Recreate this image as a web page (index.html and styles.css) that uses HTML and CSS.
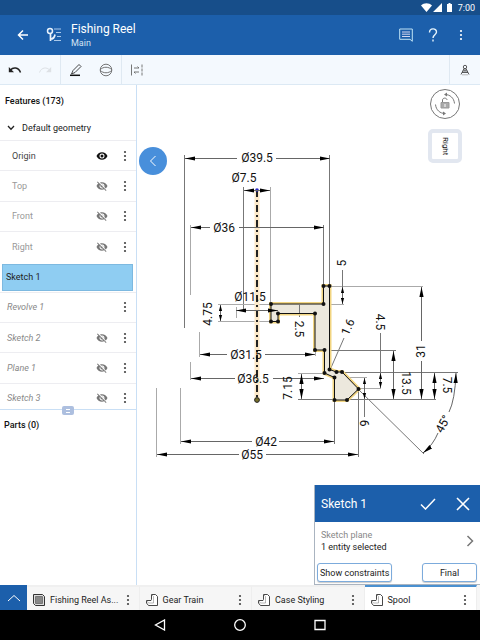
FILE: index.html
```html
<!DOCTYPE html>
<html lang="en">
<head>
<meta charset="utf-8">
<meta name="viewport" content="width=device-width, initial-scale=1">
<title>Fishing Reel</title>
<link rel="stylesheet" href="styles.css">
</head>
<body>
<svg class="defs" width="0" height="0" aria-hidden="true">
  <symbol id="dots" viewBox="0 0 4 12"><circle cx="2" cy="2" r="1.1"/><circle cx="2" cy="6" r="1.1"/><circle cx="2" cy="10" r="1.1"/></symbol>
  <symbol id="eye" viewBox="0 0 24 24"><path d="M12 4.500C7 4.500 2.700 7.600 1 12c1.700 4.400 6 7.500 11 7.500s9.300-3.100 11-7.500c-1.700-4.400-6-7.500-11-7.500zM12 17a5 5 0 1 1 0-10 5 5 0 0 1 0 10zm0-8a3 3 0 1 0 0 6 3 3 0 0 0 0-6z"/></symbol>
  <symbol id="eye-off" viewBox="0 0 24 24"><path d="M12 7a5 5 0 0 1 4.640 6.830l2.920 2.920A11.800 11.800 0 0 0 23 12c-1.730-4.390-6-7.500-11-7.500-1.400 0-2.740.25-3.980.7l2.160 2.160C10.740 7.130 11.350 7 12 7zM2 4.270l2.740 2.740A11.800 11.800 0 0 0 1 12c1.730 4.390 6 7.500 11 7.500 1.550 0 3.030-.3 4.380-.84L19.730 22 21 20.730 3.270 3 2 4.270zM7.530 9.800l1.550 1.550A3 3 0 0 0 12.650 14.920l1.550 1.550A5 5 0 0 1 7.530 9.800zm4.310-.78l3.150 3.150.02-.16a3 3 0 0 0-3-3l-.17.01z"/></symbol>
  <symbol id="part" viewBox="0 0 14 14"><path d="M6.500 1.500h4l2 2v9h-9l-2-2.500V7.500h4.500l.5-1z" fill="#fff" stroke="#333" stroke-width=".9"/><path d="M6.500 1.500l2 2V10H3.500l-2-2.500" fill="none" stroke="#888" stroke-width=".6"/></symbol>
</svg>

<div class="screen">
  <div class="status">
    <svg width="33" height="10" viewBox="0 0 33 10" fill="#fff"><path d="M0 2.500C3-.5 8-.5 11 2.500L5.500 9zM12 9l9-9v9zM26 1h1.500V0h2v1H31v8h-5z"/></svg>
    <span>7:00</span>
  </div>

  <header class="appbar">
    <button class="plain" aria-label="Back"><svg width="12" height="12" viewBox="0 0 12 12" fill="none" stroke="#fff" stroke-width="1.500"><path d="M11 6H2M6 1.500L1.500 6 6 10.500"/></svg></button>
    <button class="plain versions" aria-label="Versions"><svg width="16" height="16" viewBox="0 0 16 16" fill="none" stroke="#eaf3fc"><circle cx="4" cy="4" r="2.500" stroke-width="1.500"/><path d="M4.500 6.500V14M4.500 12c3 0 4-1.500 4.500-4.500" stroke-width="1.700"/><path d="M8 2h7M10 5.500h5M11 9.500h4M8 13.500h7" stroke="#a9c8ea"/></svg></button>
    <div class="heading"><h1>Fishing Reel</h1><p>Main</p></div>
    <div class="actions">
      <button class="plain" aria-label="Comments"><svg width="14" height="14" viewBox="0 0 14 14" fill="none" stroke="#bfe3f5"><path d="M.7 1h12.600v12.300L11 11.300H.7z"/><path d="M3 4h8M3 6.200h8M3 8.500h8" stroke="#d4d8f0"/></svg></button>
      <button class="plain" aria-label="Help"><svg width="10" height="14" viewBox="0 0 10 14" fill="none" stroke="#e6f4fc" stroke-width="1.400"><path d="M1.500 4.500C1.500-.3 8.500-.3 8.500 4c0 2.700-3.500 2.800-3.500 6"/><path d="M5 11.500v2"/></svg></button>
      <button class="plain" aria-label="More"><svg width="4" height="12" fill="#fff"><use href="#dots"/></svg></button>
    </div>
  </header>

  <nav class="toolbar" aria-label="Tools">
    <div class="tools">
      <button class="plain" aria-label="Undo"><svg width="14" height="10" viewBox="0 0 14 10"><path d="M2.500 5C5 2 10.500 2 12.500 7.500" fill="none" stroke="#222" stroke-width="1.500"/><path d="M.8 2v5.200H6z" fill="#222"/></svg></button>
      <button class="plain" aria-label="Redo"><svg width="14" height="10" viewBox="0 0 14 10"><path d="M11.500 5C9 2 3.500 2 1.500 7.500" fill="none" stroke="#dde1e5"/><path d="M13.200 2v5.200H8z" fill="#dde1e5"/></svg></button>
    </div>
    <div class="tools">
      <button class="plain" aria-label="Sketch"><svg width="14" height="14" viewBox="0 0 14 14" fill="none" stroke="#333"><path d="M2.500 11L4 7.500 10 1.500l2 2L6 9.500z" stroke-width=".9"/><path d="M1 12.300h10" stroke="#111" stroke-width="1.500"/></svg></button>
      <button class="plain" aria-label="Construction"><svg width="14" height="14" viewBox="0 0 14 14" fill="none" stroke="#555" stroke-width=".8"><circle cx="7" cy="7" r="5.800"/><path d="M1.500 6.500C4 3.500 10 3.500 12.500 6.500M1.500 7.500c2.500 3 8.500 3 11 0"/></svg></button>
    </div>
    <div class="tools">
      <button class="plain" aria-label="Dimension"><svg width="14" height="14" viewBox="0 0 14 14" fill="none" stroke="#666" stroke-width=".9"><path d="M1.500 1.500v11"/><path d="M12 1.500v11" stroke-dasharray="3 1"/><path d="M4 5h5M7.500 3.500L9 5M4 9h5M5.500 10.500L4 9"/></svg></button>
    </div>
    <div class="tools end">
      <button class="plain" aria-label="Inspect"><svg width="10" height="12" viewBox="0 0 10 12" fill="none" stroke="#333" stroke-width=".8"><circle cx="5" cy="3" r="1.700"/><path d="M4 4.500L2 8.500h6L6 4.500M1 10.500l1-2M9 10.500l-1-2M4 8V6h2v2"/><path d="M2 10.800h6" stroke="#aaa"/></svg></button>
    </div>
  </nav>

  <main class="workspace">
    <aside class="sidebar">
      <section class="features">
        <h2>Features (173)</h2>
        <button class="plain group"><svg width="8" height="6" viewBox="0 0 8 6" fill="none" stroke="#222" stroke-width="1.300"><path d="M1 1l3 3.200L7 1"/></svg>Default geometry</button>
        <ul>
          <li class="on"><span>Origin</span><button class="plain" aria-label="Hide Origin"><svg width="12" height="12"><use href="#eye"/></svg></button><button class="plain" aria-label="Origin menu"><svg width="4" height="12"><use href="#dots"/></svg></button></li>
          <li><span>Top</span><button class="plain" aria-label="Show Top"><svg width="12" height="12"><use href="#eye-off"/></svg></button><button class="plain" aria-label="Top menu"><svg width="4" height="12"><use href="#dots"/></svg></button></li>
          <li><span>Front</span><button class="plain" aria-label="Show Front"><svg width="12" height="12"><use href="#eye-off"/></svg></button><button class="plain" aria-label="Front menu"><svg width="4" height="12"><use href="#dots"/></svg></button></li>
          <li><span>Right</span><button class="plain" aria-label="Show Right"><svg width="12" height="12"><use href="#eye-off"/></svg></button><button class="plain" aria-label="Right menu"><svg width="4" height="12"><use href="#dots"/></svg></button></li>
          <li class="selected"><span>Sketch 1</span></li>
          <li class="later"><span>Revolve 1</span><button class="plain" aria-label="Revolve 1 menu"><svg width="4" height="12"><use href="#dots"/></svg></button></li>
          <li class="later"><span>Sketch 2</span><button class="plain" aria-label="Show Sketch 2"><svg width="12" height="12"><use href="#eye-off"/></svg></button><button class="plain" aria-label="Sketch 2 menu"><svg width="4" height="12"><use href="#dots"/></svg></button></li>
          <li class="later"><span>Plane 1</span><button class="plain" aria-label="Show Plane 1"><svg width="12" height="12"><use href="#eye-off"/></svg></button><button class="plain" aria-label="Plane 1 menu"><svg width="4" height="12"><use href="#dots"/></svg></button></li>
          <li class="later"><span>Sketch 3</span><button class="plain" aria-label="Show Sketch 3"><svg width="12" height="12"><use href="#eye-off"/></svg></button><button class="plain" aria-label="Sketch 3 menu"><svg width="4" height="12"><use href="#dots"/></svg></button></li>
        </ul>
      </section>
      <section class="parts">
        <button class="plain handle" aria-label="Resize lists"><svg width="4" height="4" viewBox="0 0 4 4" fill="none" stroke="#fff"><path d="M0 .5h4M0 3.500h4"/></svg></button>
        <h2>Parts (0)</h2>
      </section>
    </aside>

    <div class="canvas">
      <svg class="drawing" viewBox="137 85 343 500" preserveAspectRatio="xMinYMin meet">
        <defs>
          <marker id="arrow" markerUnits="userSpaceOnUse" markerWidth="10" markerHeight="5" refX="10" refY="2.500" orient="auto-start-reverse"><path d="M0 .4L10 2.500 0 4.600z"/></marker>
          <marker id="tip" markerUnits="userSpaceOnUse" markerWidth="6" markerHeight="4" refX="6" refY="2" orient="auto-start-reverse"><path d="M0 .4L6 2 0 3.600z"/></marker>
        </defs>
        <g class="ext">
          <path class="dark" d="M184.500 155v173M329.500 155v131M323.500 225v61"/>
          <path class="dark" d="M243.500 187v123"/>
          <path d="M270.500 187v117M190.500 225v70M236.500 307v11M278.500 307v7"/>
          <path d="M218 304.500h53M218 321.500h53M199.500 332v25M190.500 362v18M298 373.500h26M180.500 388v56M156.500 388v69"/>
          <path class="dark" d="M298 399.500h138M334.500 400v44M358.500 390v67"/>
          <path d="M330 286.500h93M323 304.500h21M334 377.500h33M358 388.500h23M315.500 350v6"/>
          <path class="dark" d="M342 372.500h116M315 350.500h81"/>
          <path class="dark" d="M359 390l65 64M330 370l14-32M299.500 304v13M342.500 270v18"/>
        </g>
        <path class="axis-glow" d="M257 190v210"/>
        <path class="axis" d="M257 190v210"/>
        <path class="profile-glow" d="M323.500 286h6v83.500l7 2.500h5.500l16.500 17-11.500 11h-12.500v-22.500l-10-4.500v-23H315v-36.500h-37v8h-7V304h52.500z"/>
        <path class="profile" d="M323.500 286h6v83.500l7 2.500h5.500l16.500 17-11.500 11h-12.500v-22.500l-10-4.500v-23H315v-36.500h-37v8h-7V304h52.500z"/>
        <path class="points" d="M323.500 286h0M329.500 286h0M329.500 369.500h0M336.500 372h0M342 372h0M358.500 389h0M347 400h0M334.500 400h0M334.500 377.500h0M324.500 373h0M324.500 350h0M315 350h0M315 313.500h0M278 313.500h0M278 321.500h0M271 321.500h0M271 304h0M323.500 304h0"/>
        <circle cx="257" cy="190" r="1.800" fill="#2929c4"/>
        <circle cx="257" cy="400" r="2.400" fill="#77702b" stroke="#222"/>
        <path class="ext-line" d="M299.500 304v9"/>
        <g class="dim start">
          <path d="M185 158.500h52"/><path d="M191 227.500h19"/><path d="M200 354.500h27"/><path d="M191 378.500h44"/><path d="M181 441.500h71"/><path d="M157 454.500h82"/><path d="M421.500 287v54"/>
          <path d="M456 373Q455 400 449 412"/>
        </g>
        <g class="dim finish">
          <path d="M276 158.500h54"/><path d="M239 227.500h85"/><path d="M265 354.500h50"/><path d="M273 378.500h51"/><path d="M279 441.500h55"/><path d="M266 454.500h92"/><path d="M421.500 361v38"/>
          <path d="M438 433Q433 445 423 453"/>
        </g>
        <g class="dim both">
          <path d="M244 190.500h26"/><path d="M236 310.500h42"/><path d="M301.500 374v25"/><path d="M393.500 351v48"/><path d="M434.500 373v26"/>
        </g>
        <g class="dim small">
          <path d="M220.500 305v16"/><path d="M342.500 287v17"/><path d="M380.500 373v15"/><path d="M364.500 378v21"/>
        </g>
        <path class="ext-line" d="M380.500 333v40M364.500 399v18"/>
        <g class="labels">
          <text x="257" y="162">Ø39.5</text>
          <text x="244" y="182">Ø7.5</text>
          <text x="224" y="232">Ø36</text>
          <text x="250" y="301">Ø11.5</text>
          <text x="246" y="359">Ø31.5</text>
          <text x="253" y="383">Ø36.5</text>
          <text x="266" y="446">Ø42</text>
          <text x="252" y="459">Ø55</text>
          <text transform="translate(208 314) rotate(-90)" y="4">4.75</text>
          <text transform="translate(288 388) rotate(-90)" y="4">7.15</text>
          <text transform="translate(342 263) rotate(-90)" y="4">5</text>
          <text transform="translate(421 351) rotate(-90)" y="4">31</text>
          <text transform="translate(299 329) rotate(90)" y="4">2.5</text>
          <text transform="translate(380 322) rotate(90)" y="4">4.5</text>
          <text transform="translate(406 383) rotate(90)" y="4">13.5</text>
          <text transform="translate(447 385) rotate(90)" y="4">7.5</text>
          <text transform="translate(364 423) rotate(90)" y="4">6</text>
          <text transform="translate(348 327) rotate(-66)" y="4">1.6</text>
          <text transform="translate(443 424) rotate(-62)" y="4">45°</text>
        </g>
      </svg>

      <button class="plain collapse" aria-label="Collapse list"><svg width="8" height="12" viewBox="0 0 8 12" fill="none" stroke="#fff"><path d="M6.500 1L1.500 6l5 5"/></svg></button>

      <div class="view-tools">
        <button class="plain" aria-label="Rotation lock"><svg width="32" height="32" viewBox="0 0 32 32" fill="none" stroke="#777"><circle cx="16" cy="16" r="14.500" fill="#fff"/><path d="M16 6.500c5 0 9 3.500 9.500 9M16 25.500c-5 0-9-3.500-9.500-9"/><path d="M18 4.500l-3 2 3 2zM14 27.500l3-2-3-2z" fill="#777" stroke="none"/><path d="M12 14.500h8V20h-8z" fill="#aaa" stroke="#999"/><path d="M13.500 14v-2c0-2.500 4.500-2.500 4.500 0"/><path d="M16 16v3" stroke="#fff"/></svg></button>
        <button class="plain cube" aria-label="View cube"><span>Right</span></button>
      </div>

      <section class="dialog">
        <header>
          <h2>Sketch 1</h2>
          <button class="plain" aria-label="Accept"><svg width="16" height="12" viewBox="0 0 16 12" fill="none" stroke="#fff" stroke-width="1.500"><path d="M1 6.500L5.500 11 15 1"/></svg></button>
          <button class="plain" aria-label="Cancel"><svg width="14" height="14" viewBox="0 0 14 14" fill="none" stroke="#fff" stroke-width="1.600"><path d="M1 1l12 12M13 1L1 13"/></svg></button>
        </header>
        <button class="plain plane"><span><span class="hint">Sketch plane</span>1 entity selected</span><svg width="8" height="12" viewBox="0 0 8 12" fill="none" stroke="#777" stroke-width="1.500"><path d="M1.500 1l5 5-5 5"/></svg></button>
        <footer><button class="outlined">Show constraints</button><button class="outlined final">Final</button></footer>
      </section>
    </div>
  </main>

  <nav class="tabs" aria-label="Documents">
    <button class="plain up" aria-label="Show all tabs"><svg width="14" height="8" viewBox="0 0 14 8" fill="none" stroke="#fff"><path d="M1 7l6-5.500L13 7"/></svg></button>
    <div class="tab"><svg width="14" height="14" viewBox="0 0 14 14" fill="none" stroke="#333"><path d="M1.500 1.500h9l2 2v9h-9l-2-2z" fill="#ddd"/><path d="M3.500 3.500h7v7h-7z" fill="#888" stroke="#777"/></svg><a href="#assembly">Fishing Reel As...</a><button class="plain" aria-label="Fishing Reel menu"><svg width="4" height="12"><use href="#dots"/></svg></button></div>
    <div class="tab"><svg width="14" height="14"><use href="#part"/></svg><a href="#gears">Gear Train</a><button class="plain" aria-label="Gear Train menu"><svg width="4" height="12"><use href="#dots"/></svg></button></div>
    <div class="tab"><svg width="14" height="14"><use href="#part"/></svg><a href="#case">Case Styling</a><button class="plain" aria-label="Case Styling menu"><svg width="4" height="12"><use href="#dots"/></svg></button></div>
    <div class="tab active"><svg width="14" height="14"><use href="#part"/></svg><a href="#spool">Spool</a><button class="plain" aria-label="Spool menu"><svg width="4" height="12"><use href="#dots"/></svg></button></div>
  </nav>

  <nav class="system" aria-label="System">
    <button class="plain" aria-label="System back"><svg width="12" height="12" viewBox="0 0 12 12" fill="none" stroke="#fff" stroke-width="1.300"><path d="M10.500 1v10L1.500 6z"/></svg></button>
    <button class="plain" aria-label="Home"><svg width="12" height="12" viewBox="0 0 12 12" fill="none" stroke="#fff" stroke-width="1.300"><circle cx="6" cy="6" r="5.300"/></svg></button>
    <button class="plain" aria-label="Recent"><svg width="12" height="12" viewBox="0 0 12 12" fill="none" stroke="#fff" stroke-width="1.300"><path d="M1 1.500h10v9H1z"/></svg></button>
  </nav>
</div>
</body>
</html>
```
FILE: styles.css
```css
* { box-sizing: border-box; margin: 0; padding: 0; }
body { font: 9px/12px Roboto, "Liberation Sans", sans-serif; color: #222; background: #fff; }
svg { display: block; flex: none; }
a { color: inherit; text-decoration: none; }
button { font: inherit; color: inherit; cursor: pointer; }
.defs { position: absolute; }
.plain { display: flex; align-items: center; justify-content: center; background: none; border: 0; }

.screen { display: flex; flex-direction: column; min-height: 100vh; }

.status { display: flex; align-items: center; justify-content: flex-end; gap: 4px; height: 15px; padding: 0 5px; background: #174e8a; color: #fff; }

.appbar { display: flex; align-items: center; height: 40px; padding: 0 17px; background: #1c5fab; color: #fff; }
.versions { margin-left: 17px; }
.heading { margin-left: 9px; }
.heading h1 { font-size: 12px; line-height: 15px; font-weight: 400; }
.heading p { line-height: 12px; color: #d5e3f3; }
.actions { display: flex; align-items: center; gap: 15px; margin-left: auto; }
.actions .plain:last-child { margin-left: 6px; }

.toolbar { display: flex; height: 30px; background: #f4f9fe; border-bottom: 1px solid #dce9f4; }
.tools { display: flex; align-items: center; gap: 16px; padding: 0 8px; }
.tools + .tools { border-left: 1px solid #dfe9f2; }
.tools.end { margin-left: auto; padding: 0 10px; }

.workspace { display: flex; flex: 1; min-height: 0; }
.sidebar { display: flex; flex-direction: column; flex: 0 0 137px; border-right: 1px solid #c9dff5; }
.sidebar h2 { font-size: 9px; line-height: 12px; font-weight: 500; color: #111; }
.features { display: flex; flex-direction: column; height: 324px; overflow: hidden; }
.features h2 { padding: 10px 5px; }
.group { gap: 7px; justify-content: flex-start; padding: 4px 7px 6px; height: 23px; flex: none; }
.features ul { display: grid; grid-template-rows: repeat(9, 1fr); height: 273px; flex: none; list-style: none; }
.features li { display: flex; align-items: center; gap: 15px; padding: 0 9px 0 12px; border-top: 1px solid #ededf1; color: #999; fill: #777; }
.features li span { flex: 1; }
.features li .plain:last-child svg { fill: #444; }
.features li.on { color: #444; fill: #111; }
.features li.later { padding-left: 7px; font-style: italic; color: #888; }
.features li.selected { margin: 3px 3px 1px 2px; padding: 0 3px; border: 1px solid #7db9e0; background: #8fcdf2; color: #222; }

.parts { position: relative; flex: 1; padding: 9px 4px; border-top: 1px solid #c9dff5; }
.handle { position: absolute; left: 50%; top: -4px; width: 12px; height: 9px; margin-left: -6px; border-radius: 2px; background: #adbfdf; }

.canvas { position: relative; flex: 1; min-width: 0; }
.drawing { width: 100%; height: auto; }
.ext path, .ext-line { fill: none; stroke: #aaa; stroke-width: 1; }
.ext .dark, .ext-line { stroke: #777; }
.dim path { fill: none; stroke: #666; stroke-width: 1; }
.start path { marker-start: url(#arrow); }
.finish path { marker-end: url(#arrow); }
.both path { marker-start: url(#arrow); marker-end: url(#arrow); }
.small path { marker-start: url(#tip); marker-end: url(#tip); }
marker path { fill: #000; stroke: none; }
.axis-glow { stroke: #fce8c8; stroke-width: 5; }
.axis { stroke: #222; stroke-width: 2; stroke-dasharray: 7 3 2 3; }
.profile-glow { fill: none; stroke: #f2d581; stroke-width: 4; }
.profile { fill: #ece8dd; stroke: #111; stroke-width: 1; }
.points { stroke: #111; stroke-width: 4; stroke-linecap: round; }
.labels { font-size: 12px; fill: #111; text-anchor: middle; }

.collapse { position: absolute; left: 2px; top: 62px; width: 28px; height: 28px; border-radius: 50%; background: #488fdb; }
.view-tools { position: absolute; right: 18px; top: 3px; display: flex; flex-direction: column; align-items: center; gap: 9px; }
.cube { width: 34px; height: 34px; border: 4px solid #e2e7f0; border-radius: 5px; background: #fff; font-size: 8px; }
.cube span { writing-mode: vertical-rl; }

.dialog { position: absolute; right: 0; bottom: 0; width: 166px; border: 1px solid #aab4c0; border-width: 0 0 1px 1px; background: #fff; }
.dialog header { display: flex; align-items: center; gap: 20px; height: 37px; padding: 0 10px 0 6px; background: #1c5fab; color: #fff; }
.dialog h2 { flex: 1; font-size: 12px; line-height: 16px; font-weight: 400; }
.plane { justify-content: space-between; width: 100%; height: 38px; padding: 0 6px; text-align: left; }
.hint { display: block; color: #888; }
.dialog footer { display: flex; justify-content: space-between; padding: 3px 3px 2px 2px; }
.outlined { height: 19px; padding: 0 2px; border: 1px solid #7cabdc; border-radius: 3px; background: #fff; box-shadow: 0 1px 1px #ccc; }
.final { width: 55px; }

.tabs { display: flex; height: 25px; padding-right: 3px; background: #f6f6f6; }
.up { flex: 0 0 27px; background: #1c5fab; }
.tab { display: flex; flex: 1; align-items: center; gap: 4px; min-width: 0; padding: 2px 9px 0 5px; border-top: 2px solid #f0f0f0; border-right: 1px solid #eee; fill: #444; }
.tab a { flex: 1; white-space: nowrap; }
.tab.active { border-top-color: #4a90d0; background: #fff; }

.system { display: flex; align-items: center; justify-content: center; gap: 68px; height: 30px; background: #000; }
```
